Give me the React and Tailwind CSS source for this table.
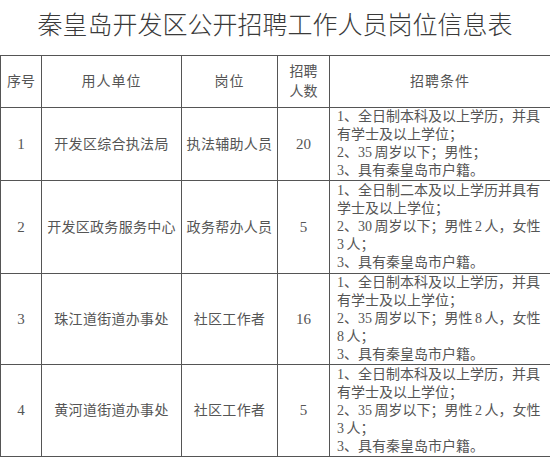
const rows = [
  {
    no: '1',
    unit: '开发区综合执法局',
    post: '执法辅助人员',
    count: '20',
    h: 'h-[73px]',
    cond: ['1、全日制本科及以上学历，并具', '有学士及以上学位；', '2、35 周岁以下；男性；', '3、具有秦皇岛市户籍。'],
  },
  {
    no: '2',
    unit: '开发区政务服务中心',
    post: '政务帮办人员',
    count: '5',
    h: 'h-[93px]',
    cond: ['1、全日制二本及以上学历并具有', '学士及以上学位；', '2、30 周岁以下；男性 2 人，女性', '3 人；', '3、具有秦皇岛市户籍。'],
  },
  {
    no: '3',
    unit: '珠江道街道办事处',
    post: '社区工作者',
    count: '16',
    h: 'h-[91px]',
    cond: ['1、全日制本科及以上学历，并具', '有学士及以上学位；', '2、35 周岁以下；男性 8 人，女性', '8 人；', '3、具有秦皇岛市户籍。'],
  },
  {
    no: '4',
    unit: '黄河道街道办事处',
    post: '社区工作者',
    count: '5',
    h: 'h-[92px]',
    cond: ['1、全日制本科及以上学历，并具', '有学士及以上学位；', '2、35 周岁以下；男性 2 人，女性', '3 人；', '3、具有秦皇岛市户籍。'],
  },
]

const cell = 'border border-[#555] text-center align-middle p-0'

export default function App() {
  return (
    <div
      className="w-[550px] h-[457px] bg-white overflow-hidden text-[#555]"
      style={{ fontFamily: '"Liberation Serif", "Noto Sans CJK SC", serif' }}
    >
      <div className="h-[55px] flex items-center justify-center pb-[4px]">
        <h1 className="text-[25px] font-light text-[#3a3a3a] leading-none">
          秦皇岛开发区公开招聘工作人员岗位信息表
        </h1>
      </div>

      <table className="table-fixed border-collapse w-[560px] text-[14px]">
        <colgroup>
          <col className="w-[41px]" />
          <col className="w-[140px]" />
          <col className="w-[96px]" />
          <col className="w-[52px]" />
          <col className="w-[231px]" />
        </colgroup>
        <thead>
          <tr className="h-[52px]">
            <th className={`${cell} font-normal`}>序号</th>
            <th className={`${cell} font-normal tracking-[1px]`}>用人单位</th>
            <th className={`${cell} font-normal tracking-[1px]`}>岗位</th>
            <th className={`${cell} font-normal leading-[20px]`}>
              招聘
              <br />
              人数
            </th>
            <th className={`${cell} font-normal tracking-[1px] pr-[10px]`}>招聘条件</th>
          </tr>
        </thead>
        <tbody>
          {rows.map((r) => (
            <tr key={r.no} className={r.h}>
              <td className={`${cell} text-[15px]`}>{r.no}</td>
              <td className={`${cell} tracking-[0.3px] whitespace-nowrap`}>{r.unit}</td>
              <td className={`${cell} tracking-[0.3px] whitespace-nowrap`}>{r.post}</td>
              <td className={`${cell} text-[15px]`}>{r.count}</td>
              <td className="border border-[#555] align-middle p-0 pl-[7px] leading-[18px] [word-spacing:-1px] whitespace-nowrap">
                {r.cond.map((l, i) => (
                  <div key={i}>{l}</div>
                ))}
              </td>
            </tr>
          ))}
        </tbody>
      </table>
    </div>
  )
}
